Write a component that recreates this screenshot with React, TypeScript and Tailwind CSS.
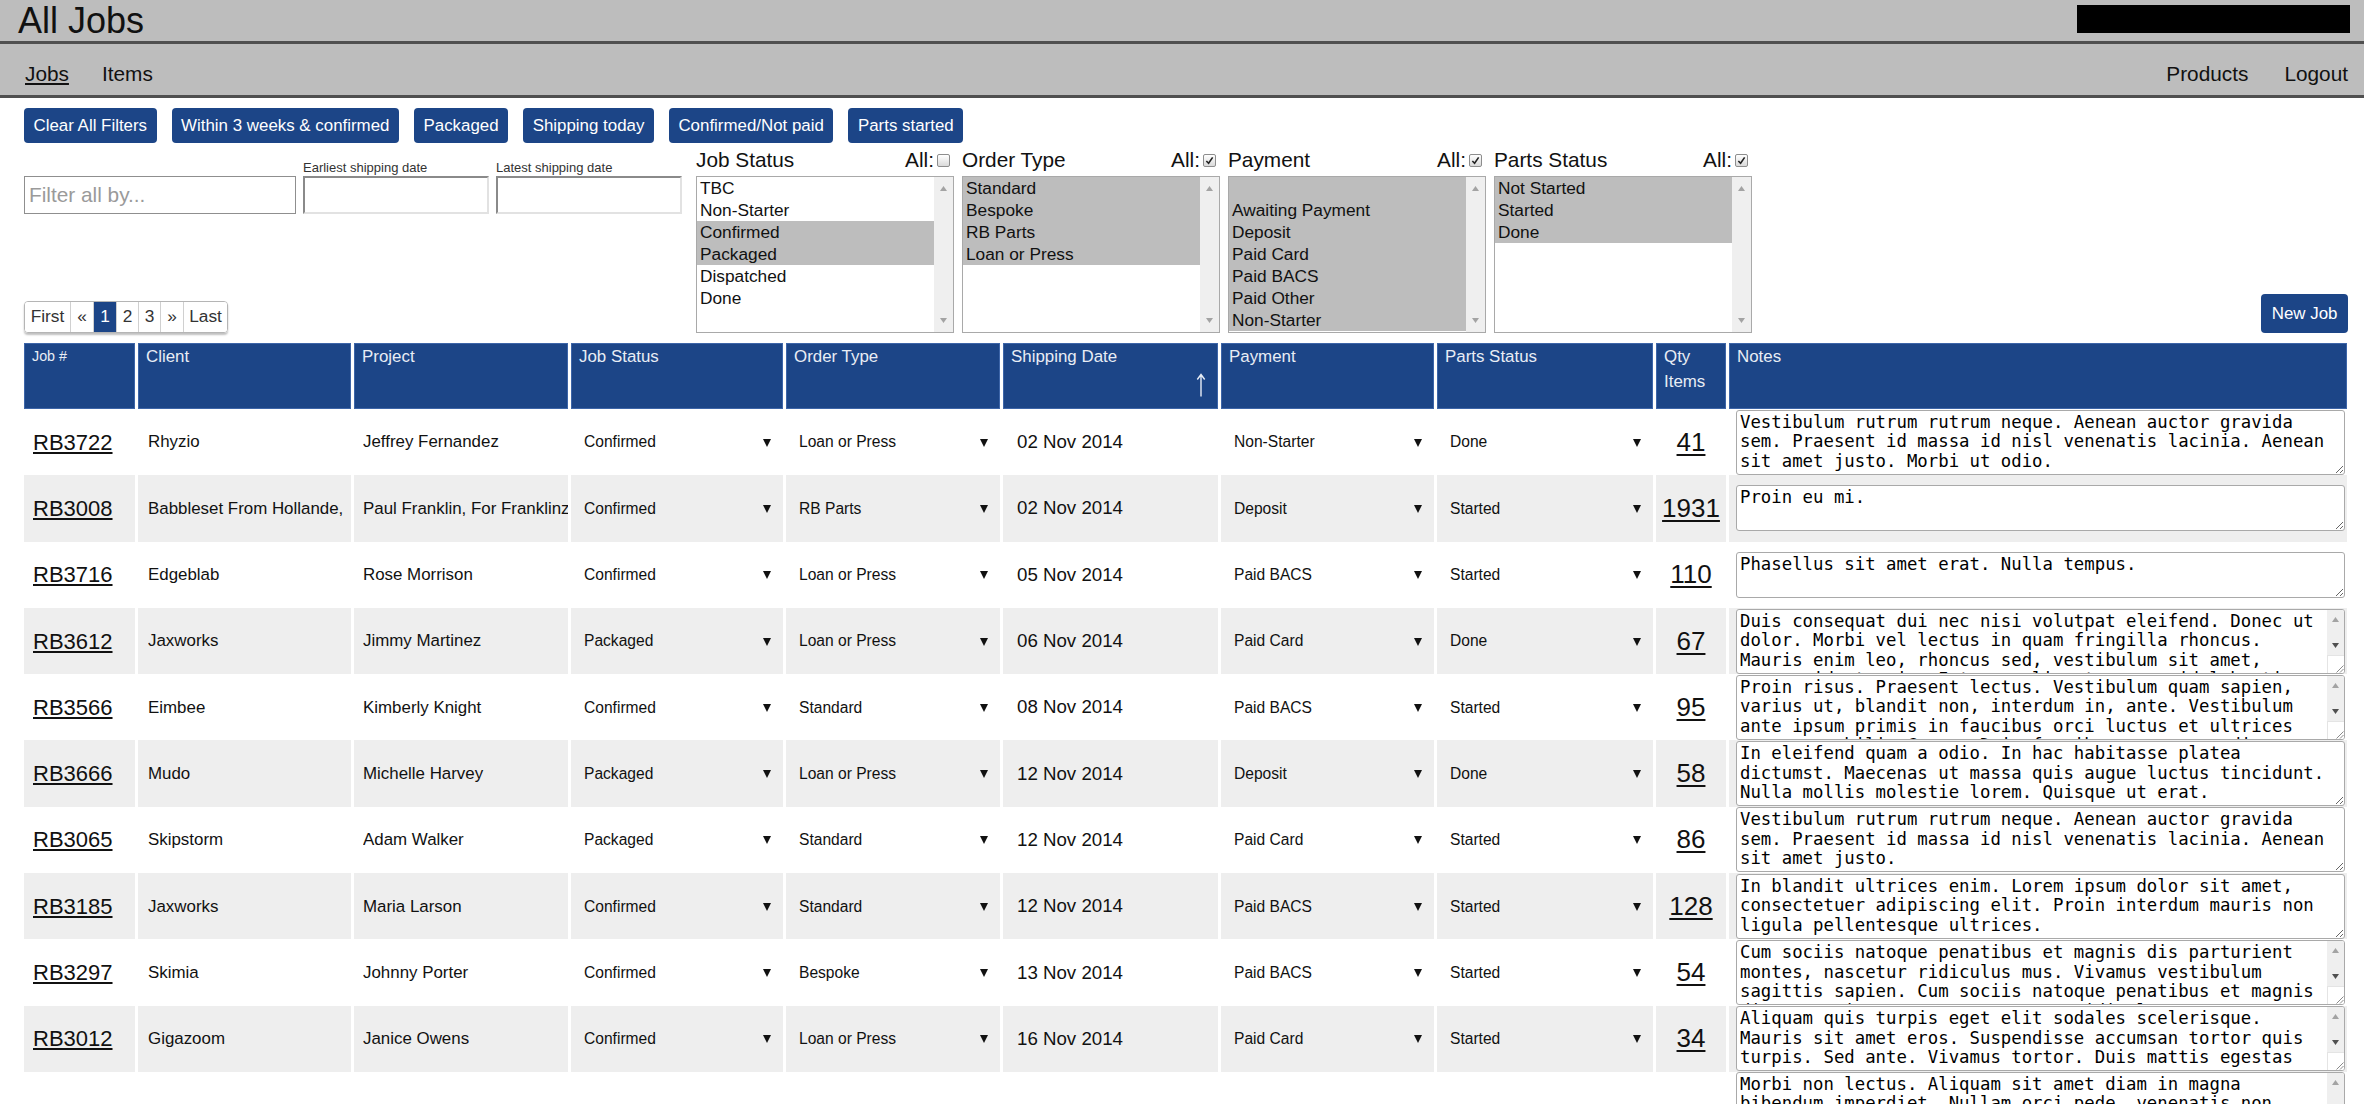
import React from 'react';

type Job = {
  id: string;
  client: string;
  project: string;
  status: string;
  orderType: string;
  shipping: string;
  payment: string;
  parts: string;
  qty: number;
  notes: string;
  size: 'short' | 'full' | 'scroll' | 'tall';
};

const jobs: Job[] = [
  { id: 'RB3722', client: 'Rhyzio', project: 'Jeffrey Fernandez', status: 'Confirmed', orderType: 'Loan or Press', shipping: '02 Nov 2014', payment: 'Non-Starter', parts: 'Done', qty: 41, size: 'full', notes: 'Vestibulum rutrum rutrum neque. Aenean auctor gravida sem. Praesent id massa id nisl venenatis lacinia. Aenean sit amet justo. Morbi ut odio.' },
  { id: 'RB3008', client: 'Babbleset From Hollande,', project: 'Paul Franklin, For Franklinz', status: 'Confirmed', orderType: 'RB Parts', shipping: '02 Nov 2014', payment: 'Deposit', parts: 'Started', qty: 1931, size: 'short', notes: 'Proin eu mi.' },
  { id: 'RB3716', client: 'Edgeblab', project: 'Rose Morrison', status: 'Confirmed', orderType: 'Loan or Press', shipping: '05 Nov 2014', payment: 'Paid BACS', parts: 'Started', qty: 110, size: 'short', notes: 'Phasellus sit amet erat. Nulla tempus.' },
  { id: 'RB3612', client: 'Jaxworks', project: 'Jimmy Martinez', status: 'Packaged', orderType: 'Loan or Press', shipping: '06 Nov 2014', payment: 'Paid Card', parts: 'Done', qty: 67, size: 'scroll', notes: 'Duis consequat dui nec nisi volutpat eleifend. Donec ut dolor. Morbi vel lectus in quam fringilla rhoncus. Mauris enim leo, rhoncus sed, vestibulum sit amet, cursus id, turpis. Integer aliquet, massa id lobortis convallis, tortor risus dapibus augue, vel accumsan tellus nisi eu orci.' },
  { id: 'RB3566', client: 'Eimbee', project: 'Kimberly Knight', status: 'Confirmed', orderType: 'Standard', shipping: '08 Nov 2014', payment: 'Paid BACS', parts: 'Started', qty: 95, size: 'scroll', notes: 'Proin risus. Praesent lectus. Vestibulum quam sapien, varius ut, blandit non, interdum in, ante. Vestibulum ante ipsum primis in faucibus orci luctus et ultrices posuere cubilia Curae; Duis faucibus accumsan odio.' },
  { id: 'RB3666', client: 'Mudo', project: 'Michelle Harvey', status: 'Packaged', orderType: 'Loan or Press', shipping: '12 Nov 2014', payment: 'Deposit', parts: 'Done', qty: 58, size: 'full', notes: 'In eleifend quam a odio. In hac habitasse platea dictumst. Maecenas ut massa quis augue luctus tincidunt. Nulla mollis molestie lorem. Quisque ut erat.' },
  { id: 'RB3065', client: 'Skipstorm', project: 'Adam Walker', status: 'Packaged', orderType: 'Standard', shipping: '12 Nov 2014', payment: 'Paid Card', parts: 'Started', qty: 86, size: 'full', notes: 'Vestibulum rutrum rutrum neque. Aenean auctor gravida sem. Praesent id massa id nisl venenatis lacinia. Aenean sit amet justo.' },
  { id: 'RB3185', client: 'Jaxworks', project: 'Maria Larson', status: 'Confirmed', orderType: 'Standard', shipping: '12 Nov 2014', payment: 'Paid BACS', parts: 'Started', qty: 128, size: 'full', notes: 'In blandit ultrices enim. Lorem ipsum dolor sit amet, consectetuer adipiscing elit. Proin interdum mauris non ligula pellentesque ultrices.' },
  { id: 'RB3297', client: 'Skimia', project: 'Johnny Porter', status: 'Confirmed', orderType: 'Bespoke', shipping: '13 Nov 2014', payment: 'Paid BACS', parts: 'Started', qty: 54, size: 'scroll', notes: 'Cum sociis natoque penatibus et magnis dis parturient montes, nascetur ridiculus mus. Vivamus vestibulum sagittis sapien. Cum sociis natoque penatibus et magnis dis parturient montes, nascetur ridiculus mus.' },
  { id: 'RB3012', client: 'Gigazoom', project: 'Janice Owens', status: 'Confirmed', orderType: 'Loan or Press', shipping: '16 Nov 2014', payment: 'Paid Card', parts: 'Started', qty: 34, size: 'scroll', notes: 'Aliquam quis turpis eget elit sodales scelerisque. Mauris sit amet eros. Suspendisse accumsan tortor quis turpis. Sed ante. Vivamus tortor. Duis mattis egestas metus.' },
  { id: 'RB3451', client: 'Oyoba', project: 'Frances Hill', status: 'Confirmed', orderType: 'Standard', shipping: '18 Nov 2014', payment: 'Deposit', parts: 'Started', qty: 22, size: 'tall', notes: 'Morbi non lectus. Aliquam sit amet diam in magna bibendum imperdiet. Nullam orci pede, venenatis non, sodales sed, tincidunt eu, felis. Fusce posuere felis sed lacus. Morbi sem mauris, laoreet ut, rhoncus aliquet, pulvinar sed, nisl.' },
];

const quickFilters = ['Clear All Filters', 'Within 3 weeks & confirmed', 'Packaged', 'Shipping today', 'Confirmed/Not paid', 'Parts started'];

const filterLists = [
  {
    label: 'Job Status',
    all: false,
    options: [
      { text: 'TBC', selected: false },
      { text: 'Non-Starter', selected: false },
      { text: 'Confirmed', selected: true },
      { text: 'Packaged', selected: true },
      { text: 'Dispatched', selected: false },
      { text: 'Done', selected: false },
    ],
  },
  {
    label: 'Order Type',
    all: true,
    options: [
      { text: 'Standard', selected: true },
      { text: 'Bespoke', selected: true },
      { text: 'RB Parts', selected: true },
      { text: 'Loan or Press', selected: true },
    ],
  },
  {
    label: 'Payment',
    all: true,
    options: [
      { text: '', selected: true },
      { text: 'Awaiting Payment', selected: true },
      { text: 'Deposit', selected: true },
      { text: 'Paid Card', selected: true },
      { text: 'Paid BACS', selected: true },
      { text: 'Paid Other', selected: true },
      { text: 'Non-Starter', selected: true },
    ],
  },
  {
    label: 'Parts Status',
    all: true,
    options: [
      { text: 'Not Started', selected: true },
      { text: 'Started', selected: true },
      { text: 'Done', selected: true },
    ],
  },
];

const pages = [
  { text: 'First', w: 'w-[45px]' },
  { text: '«', w: 'w-[23px]' },
  { text: '1', w: 'w-[23px]' },
  { text: '2', w: 'w-[22px]' },
  { text: '3', w: 'w-[22px]' },
  { text: '»', w: 'w-[23px]' },
  { text: 'Last', w: 'w-[44px]' },
];

const monoText = "font-['DejaVu_Sans_Mono',monospace] text-[17.33px] leading-[19.5px] text-black";

function CheckBox({ checked }: { checked: boolean }) {
  return (
    <span className="inline-flex h-[13px] w-[13px] items-center justify-center rounded-[2px] border border-[#8d8d8d] bg-linear-to-b from-white to-[#dadada]">
      {checked && (
        <svg viewBox="0 0 10 10" className="h-[9px] w-[9px]">
          <path d="M1.5 5.5 L4 8 L8.5 1.5" fill="none" stroke="#222" strokeWidth="1.8" />
        </svg>
      )}
    </span>
  );
}

function ListBox({ label, all, options }: { label: string; all: boolean; options: { text: string; selected: boolean }[] }) {
  return (
    <div className="flex w-[258px] flex-col">
      <div className="flex h-[24px] items-center justify-between pr-[4px] text-[20.8px] leading-[24px]">
        <span>{label}</span>
        <span className="flex items-center gap-[3px]">
          All:
          <CheckBox checked={all} />
        </span>
      </div>
      <div className="mt-[4px] flex h-[157px] border border-[#a9a9a9] bg-white">
        <div className="flex-1 text-[17.3px] leading-[22px]">
          {options.map((o, i) => (
            <div key={i} className={`h-[22px] pl-[3px] ${o.selected ? 'bg-[#bdbdbd]' : ''}`}>
              {o.text || '\u00a0'}
            </div>
          ))}
        </div>
        <div className="flex w-[19px] flex-col items-center justify-between bg-[#efefef] py-[9px]">
          <svg width="7" height="5" viewBox="0 0 7 5">
            <path d="M0 5h7L3.5 0z" fill="#a3a3a3" />
          </svg>
          <svg width="7" height="5" viewBox="0 0 7 5">
            <path d="M0 0h7L3.5 5z" fill="#a3a3a3" />
          </svg>
        </div>
      </div>
    </div>
  );
}

function CellSelect({ value }: { value: string }) {
  return (
    <div className="flex items-center justify-between pl-[13px] pr-[12px] text-[15.6px]">
      <span>{value}</span>
      <svg width="8" height="9" viewBox="0 0 8 9">
        <path d="M0 1h8L4 9z" fill="#111" />
      </svg>
    </div>
  );
}

function Grip() {
  return (
    <svg width="10" height="10" viewBox="0 0 10 10">
      <path d="M9.5 2.5L2.5 9.5M9.5 6L6 9.5" stroke="#8a8a8a" strokeWidth="1" fill="none" />
    </svg>
  );
}

function Notes({ job }: { job: Job }) {
  if (job.size === 'short' || job.size === 'full') {
    return (
      <textarea
        readOnly
        defaultValue={job.notes}
        className={`block w-full rounded-[3px] border border-[#a9a9a9] bg-white px-[3px] py-[2px] ${monoText} ${job.size === 'short' ? 'h-[46px]' : 'h-[65px]'}`}
      />
    );
  }
  return (
    <div className={`flex w-full overflow-hidden rounded-[3px] border border-[#a9a9a9] bg-white ${job.size === 'tall' ? 'h-[96px]' : 'h-[65px]'}`}>
      <textarea readOnly defaultValue={job.notes} className={`h-full flex-1 resize-none overflow-hidden px-[3px] py-[2px] ${monoText}`} />
      <div className="flex w-[17px] flex-col">
        <div className="flex flex-1 flex-col items-center justify-between bg-[#efefef] py-[7px]">
          <svg width="7" height="5" viewBox="0 0 7 5">
            <path d="M0 5h7L3.5 0z" fill="#a3a3a3" />
          </svg>
          <svg width="7" height="5" viewBox="0 0 7 5">
            <path d="M0 0h7L3.5 5z" fill="#505050" />
          </svg>
        </div>
        <div className="flex h-[18px] items-end justify-end border-l border-t border-[#e4e4e4] bg-white">
          <Grip />
        </div>
      </div>
    </div>
  );
}

const thBase = 'h-[66px] border border-[#3d65a8] bg-[#1c4587] px-[7px] text-left align-top font-normal leading-[25px] text-[#e8edf5]';

export default function App() {
  return (
    <div className="h-[1104px] overflow-hidden bg-white font-['Liberation_Sans',Arial,sans-serif] text-[#111]">
      <header className="flex h-[44px] items-start justify-between border-b-[3px] border-[#505050] bg-[#bdbdbd] pl-[18px] pr-[14px]">
        <h1 className="mt-[2px] text-[36px] leading-[38px]">All Jobs</h1>
        <div className="mt-[5px] h-[28px] w-[273px] bg-black" />
      </header>

      <nav className="flex h-[54px] items-end justify-between border-b-[3px] border-[#505050] bg-[#bdbdbd] pb-[6px] pl-[25px] pr-[16px] text-[20.8px]">
        <div className="flex gap-[33px]">
          <a className="underline">Jobs</a>
          <a>Items</a>
        </div>
        <div className="flex gap-[36px]">
          <a>Products</a>
          <a>Logout</a>
        </div>
      </nav>

      <main className="pl-[24px] pr-[16px]">
        <div className="mt-[10px] flex gap-[15px]">
          {quickFilters.map((f) => (
            <button key={f} className="h-[35px] rounded-[4px] bg-[#1c4587] px-[9.5px] text-[16.9px] text-white">
              {f}
            </button>
          ))}
        </div>

        <div className="mt-[5px] flex">
          <div className="flex w-[658px] flex-col justify-between pt-[12px]">
            <div className="flex items-end gap-[7px]">
              <input
                placeholder="Filter all by..."
                className="h-[38px] w-[272px] border border-[#8f8f8f] px-[4px] text-[20.8px] placeholder:text-[#9a9a9a]"
              />
              <label className="flex flex-col text-[13px] leading-[15px] text-[#333]">
                <span className="mb-[1px]">Earliest shipping date</span>
                <input className="h-[38px] w-[186px] border-2 border-t-[#8a8a8a] border-l-[#8a8a8a] border-b-[#e2e2e2] border-r-[#e2e2e2]" />
              </label>
              <label className="flex flex-col text-[13px] leading-[15px] text-[#333]">
                <span className="mb-[1px]">Latest shipping date</span>
                <input className="h-[38px] w-[186px] border-2 border-t-[#8a8a8a] border-l-[#8a8a8a] border-b-[#e2e2e2] border-r-[#e2e2e2]" />
              </label>
            </div>
            <div className="flex h-[32px] w-fit overflow-hidden rounded-[4px] border border-[#b5b5b5] text-[17.3px] text-[#333] shadow-[0_2px_2px_rgba(0,0,0,0.25)]">
              {pages.map((p, i) => (
                <span
                  key={p.text}
                  className={`flex items-center justify-center ${p.w} ${i > 0 ? 'border-l border-[#d0d0d0]' : ''} ${p.text === '1' ? 'bg-[#1c4587] text-white' : 'bg-white'}`}
                >
                  {p.text}
                </span>
              ))}
            </div>
          </div>

          <div className="ml-[14px] flex gap-[8px]">
            {filterLists.map((l) => (
              <ListBox key={l.label} label={l.label} all={l.all} options={l.options} />
            ))}
          </div>

          <div className="flex flex-1 items-end justify-end">
            <button className="h-[39px] rounded-[4px] bg-[#1c4587] px-[10.5px] text-[16.9px] text-white">New Job</button>
          </div>
        </div>

        <table className="-ml-[3px] mt-[10px] w-[2329px] table-fixed border-separate border-spacing-x-[3px] border-spacing-y-0">
          <thead>
            <tr>
              <th className={`${thBase} w-[111px] text-[14.3px]`}>Job #</th>
              <th className={`${thBase} w-[213px] text-[16.9px]`}>Client</th>
              <th className={`${thBase} w-[214px] text-[16.9px]`}>Project</th>
              <th className={`${thBase} w-[212px] text-[16.9px]`}>Job Status</th>
              <th className={`${thBase} w-[214px] text-[16.9px]`}>Order Type</th>
              <th className={`${thBase} w-[215px] text-[16.9px]`}>
                <div className="flex flex-col">
                  <span>Shipping Date</span>
                  <svg className="mr-[4px] mt-[4px] self-end" width="10" height="24" viewBox="0 0 10 24">
                    <path d="M5 23.5V1.5M1.3 6.5L5 1.5 8.7 6.5" fill="none" stroke="#e8edf5" strokeWidth="1.4" />
                  </svg>
                </div>
              </th>
              <th className={`${thBase} w-[213px] text-[16.9px]`}>Payment</th>
              <th className={`${thBase} w-[216px] text-[16.9px]`}>Parts Status</th>
              <th className={`${thBase} w-[70px] text-[16.9px]`}>
                Qty
                <br />
                Items
              </th>
              <th className={`${thBase} w-[618px] text-[16.9px]`}>Notes</th>
            </tr>
          </thead>
          <tbody>
            {jobs.map((j, i) => {
              const bg = i % 2 === 1 ? 'bg-[#eeeeee]' : 'bg-white';
              return (
                <tr key={j.id} className="h-[66.3px]">
                  <td className={`${bg} pl-[9px] align-middle text-[22px]`}>
                    <a className="underline">{j.id}</a>
                  </td>
                  <td className={`${bg} pl-[10px] align-middle text-[16.9px]`}>
                    <div className="overflow-hidden whitespace-nowrap">{j.client}</div>
                  </td>
                  <td className={`${bg} pl-[9px] align-middle text-[16.9px]`}>
                    <div className="overflow-hidden whitespace-nowrap">{j.project}</div>
                  </td>
                  <td className={`${bg} align-middle`}>
                    <CellSelect value={j.status} />
                  </td>
                  <td className={`${bg} align-middle`}>
                    <CellSelect value={j.orderType} />
                  </td>
                  <td className={`${bg} pl-[14px] align-middle text-[18.7px]`}>{j.shipping}</td>
                  <td className={`${bg} align-middle`}>
                    <CellSelect value={j.payment} />
                  </td>
                  <td className={`${bg} align-middle`}>
                    <CellSelect value={j.parts} />
                  </td>
                  <td className={`${bg} text-center align-middle text-[26px]`}>
                    <a className="underline decoration-2 underline-offset-[3px]">{j.qty}</a>
                  </td>
                  <td className={`${bg} pl-[7px] pr-[2px] align-middle`}>
                    <Notes job={j} />
                  </td>
                </tr>
              );
            })}
          </tbody>
        </table>
      </main>
    </div>
  );
}
